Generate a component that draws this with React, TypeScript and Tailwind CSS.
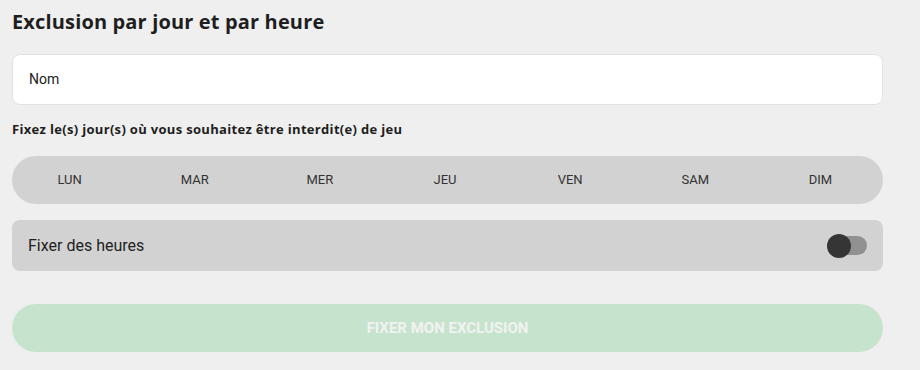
const days = ["LUN", "MAR", "MER", "JEU", "VEN", "SAM", "DIM"];

export default function App() {
  return (
    <div className="min-h-[370px] w-[920px] bg-[#efefef] pl-3 pr-[37px] pt-[9px] font-['Roboto',sans-serif]">
      {/* Title */}
      <h1 className="font-['Open_Sans',sans-serif] text-[20px] font-bold leading-[26px] tracking-[0.15px] text-[#1e1e1e]">
        Exclusion par jour et par heure
      </h1>

      {/* Nom input */}
      <div className="mt-[19px] flex h-[51px] items-center rounded-lg border border-[#e2e2e2] bg-white px-4 text-[14px] text-[#222]">
        Nom
      </div>

      <p className="mt-[15px] font-['Open_Sans',sans-serif] text-[13px] font-bold leading-[18px] tracking-[0.32px] text-[#1e1e1e]">
        Fixez le(s) jour(s) où vous souhaitez être interdit(e) de jeu
      </p>

      {/* Days */}
      <div className="mt-[18px] flex h-12 items-center rounded-full bg-[#d2d2d2]">
        <div className="-ml-[5px] grid w-[880px] grid-cols-7">
          {days.map((d) => (
            <span key={d} className="text-center text-[13px] text-[#333]">
              {d}
            </span>
          ))}
        </div>
      </div>

      {/* Hours toggle */}
      <div className="mt-4 flex h-[51px] items-center justify-between rounded-lg bg-[#d2d2d2] px-4">
        <span className="text-[16px] text-[#1e1e1e]">Fixer des heures</span>
        <div className="relative h-[19px] w-[40px]">
          <div className="absolute left-[10px] top-0 h-[19px] w-[30px] rounded-full bg-[#919191]" />
          <div className="absolute left-0 -top-[2.5px] h-6 w-6 rounded-full bg-[#353535]" />
        </div>
      </div>

      {/* Submit */}
      <button className="mt-[33px] flex h-12 w-full items-center justify-center rounded-full bg-[#c6e4cd] text-[15px] font-bold text-[#f2f2f2]">
        FIXER MON EXCLUSION
      </button>
    </div>
  );
}
